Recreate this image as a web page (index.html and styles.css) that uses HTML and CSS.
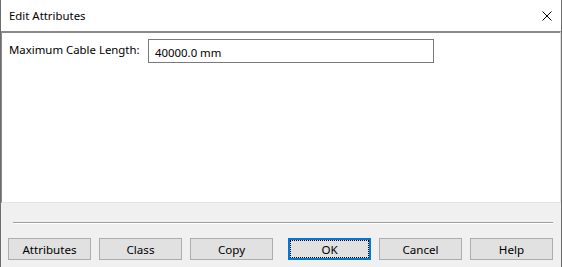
FILE: index.html
```html
<!DOCTYPE html>
<html>
<head>
<meta charset="utf-8">
<link rel="stylesheet" href="styles.css">
</head>
<body>
<div class="window">
  <div class="titlebar">
    <span class="title">Edit Attributes</span>
    <svg class="close" width="10" height="10" viewBox="0 0 10 10"><path d="M0.5 0.5 L9.5 9.5 M9.5 0.5 L0.5 9.5" stroke="#000" stroke-width="1" fill="none"/></svg>
  </div>
  <div class="panel">
    <div class="row">
      <span class="label">Maximum Cable Length:</span>
      <div class="input">40000.0 mm</div>
    </div>
  </div>
  <div class="footer">
    <div class="separator"></div>
    <div class="buttons">
      <button class="btn">Attributes</button>
      <button class="btn">Class</button>
      <button class="btn">Copy</button>
      <button class="btn btn-default"><span class="focus">OK</span></button>
      <button class="btn">Cancel</button>
      <button class="btn">Help</button>
    </div>
  </div>
</div>
</body>
</html>
```
FILE: styles.css
```css
html, body {
  margin: 0;
  padding: 0;
  background: #f0f0f0;
}
.window {
  width: 562px;
  height: 267px;
  box-sizing: border-box;
  border-left: 1px solid #6d6d6d;
  border-right: 1px solid #6d6d6d;
  display: flex;
  flex-direction: column;
  font-family: "Noto Sans", "Open Sans", sans-serif;
  font-size: 11.4px;
  color: #000;
  background: #f0f0f0;
}
.titlebar {
  height: 31px;
  flex: none;
  background: #fff;
  display: flex;
  align-items: center;
  justify-content: space-between;
  padding: 0 9px 0 8px;
}
.title {
  line-height: 16px;
}
.close {
  display: block;
}
.panel {
  flex: none;
  height: 172px;
  box-sizing: border-box;
  background: #fff;
  border-top: 2px solid #8a8a8a;
  border-left: 1px solid #8a8a8a;
  border-right: 1px solid #e3e3e3;
  border-bottom: 1px solid #e3e3e3;
  padding: 6px 0 0 7px;
}
.row {
  display: flex;
  align-items: flex-start;
}
.label {
  line-height: 16px;
  margin-top: 3px;
  width: 139px;
}
.input {
  width: 286px;
  height: 24px;
  box-sizing: border-box;
  border: 1px solid #7a7a7a;
  padding: 0 6px;
  line-height: 26px;
}
.footer {
  flex: 1;
  padding: 0 7px 0 7px;
}
.separator {
  margin: 19px 0 0 5px;
  width: 540px;
  height: 1px;
  background: #a0a0a0;
  border-bottom: 1px solid #fff;
}
.buttons {
  display: flex;
  gap: 8px;
  margin-top: 14px;
}
.btn {
  width: 83px;
  height: 22px;
  box-sizing: border-box;
  background: #e1e1e1;
  border: 1px solid #adadad;
  font-family: inherit;
  font-size: 11.6px;
  color: #000;
  padding: 0;
  margin: 0;
  display: flex;
  align-items: center;
  justify-content: center;
}
.btn-default {
  margin-left: 7px;
  border: 2px solid #0078d7;
  padding: 1px;
}
.focus {
  flex: 1;
  align-self: stretch;
  display: flex;
  align-items: center;
  justify-content: center;
  outline: 1px dotted #000;
}
```
